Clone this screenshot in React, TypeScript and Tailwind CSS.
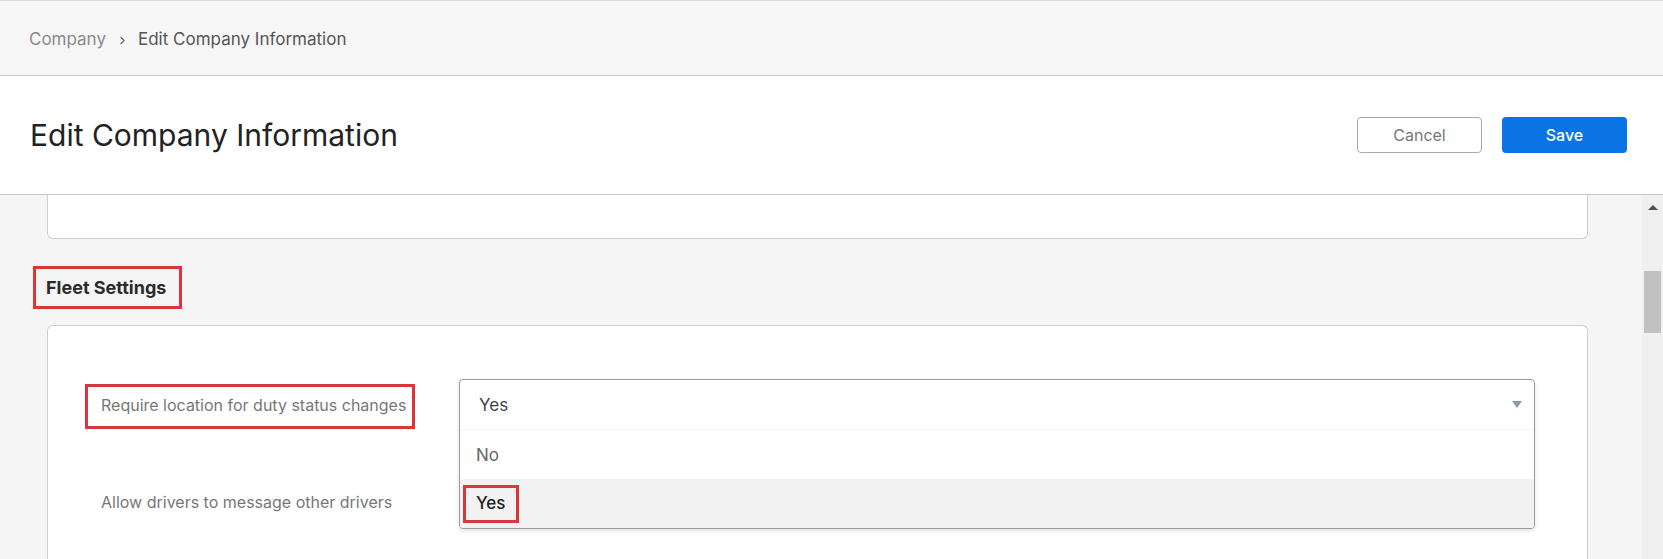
import { ChevronRight } from 'lucide-react';

const FONT = "font-['Inter',_'Noto_Sans',_sans-serif]";

function Scrollbar() {
  return (
    <div className="flex w-[21px] shrink-0 flex-col items-center bg-[#f0f0f0]">
      <div className="mt-[10px] h-0 w-0 border-x-[5px] border-b-[5px] border-x-transparent border-b-[#505050]" />
      <div className="mt-[61px] h-[62px] w-[17px] bg-[#c1c1c1]" />
    </div>
  );
}

function Dropdown() {
  return (
    <div className="relative h-[50px] flex-1">
      <div className="absolute inset-x-0 top-0 z-10 overflow-hidden rounded-[4px] border border-[#9a9a9a] bg-white shadow-[0_2px_4px_rgba(0,0,0,0.12)]">
        <div className="flex h-[50px] items-center justify-between border-b border-[#f6f6f6] pl-[19px] pr-[12px] pt-[3px]">
          <span className="text-[17px] text-[#3a4450]">Yes</span>
          <span className="-mt-[3px] h-0 w-0 border-x-[5px] border-t-[7px] border-x-transparent border-t-[#8d9ba7]" />
        </div>
        <div className="flex h-[49px] items-center pl-[16px] pt-[3px] text-[17px] text-[#666]">No</div>
        <div className="flex h-[49px] items-center bg-[#f2f2f2] pl-[3px] pt-[1px]">
          <span className="flex h-[38px] items-center border-[3px] border-[#d9363e] px-[10px] text-[17px] font-medium text-[#222]">
            Yes
          </span>
        </div>
      </div>
    </div>
  );
}

export default function App() {
  return (
    <div className={`${FONT} flex h-[559px] w-full flex-col overflow-hidden bg-[#f5f5f5]`}>
      {/* breadcrumb */}
      <div className="flex h-[76px] shrink-0 items-center border-t border-b border-t-[#dcdcdc] border-b-[#c4c4c4] bg-[#f6f6f6] pl-[29px] pt-[4px] text-[17px]">
        <span className="text-[#8a8a8a]">Company</span>
        <ChevronRight size={13} strokeWidth={2} className="ml-[10px] mr-[9px] text-[#666]" />
        <span className="text-[#555]">Edit Company Information</span>
      </div>

      {/* page header */}
      <div className="flex h-[119px] shrink-0 items-center justify-between border-b border-[#c8c8c8] bg-white pl-[30px] pr-[36px]">
        <h1 className="text-[30px] font-normal text-[#222]">Edit Company Information</h1>
        <div className="flex gap-[20px]">
          <button className="h-[36px] w-[125px] rounded-[4px] border border-[#aaa] bg-white text-[16px] text-[#777]">
            Cancel
          </button>
          <button className="h-[36px] w-[125px] rounded-[4px] bg-[#0a74e4] text-[16px] font-medium text-white">
            Save
          </button>
        </div>
      </div>

      {/* scroll area */}
      <div className="flex min-h-0 flex-1">
        <div className="flex min-w-0 flex-1 flex-col pl-[47px] pr-[54px]">
          <div className="h-[44px] shrink-0 rounded-b-[6px] border border-t-0 border-[#cfcfcf] bg-white" />

          <div className="mt-[27px] shrink-0">
            <span className="-ml-[14px] inline-flex h-[43px] items-center border-[3px] border-[#d9363e] pl-[10px] pr-[13px] text-[18px] font-bold text-[#2b2b2b]">
              Fleet Settings
            </span>
          </div>

          <div className="mt-[16px] flex-1 rounded-t-[6px] border border-b-0 border-[#cfcfcf] bg-white pl-[53px] pr-[52px] pt-[52px]">
            <div className="flex items-center">
              <div className="w-[358px] shrink-0">
                <span className="-ml-[16px] mt-[6px] inline-flex h-[45px] items-center border-[3px] border-[#d9363e] pb-[4px] pl-[13px] pr-[6px] text-[16px] text-[#777]">
                  Require location for duty status changes
                </span>
              </div>
              <Dropdown />
            </div>
            <div className="mt-[48px] flex h-[50px] items-center">
              <div className="w-[358px] shrink-0 text-[16px] text-[#777]">Allow drivers to message other drivers</div>
              <div className="flex-1" />
            </div>
          </div>
        </div>
        <Scrollbar />
      </div>
    </div>
  );
}
